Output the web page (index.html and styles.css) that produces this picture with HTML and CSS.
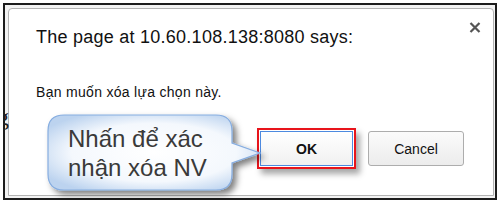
FILE: index.html
```html
<!DOCTYPE html>
<html>
<head>
<meta charset="utf-8">
<link rel="stylesheet" href="styles.css">
</head>
<body>
<div class="frame">
  <div class="dialog">
    <button class="close" aria-label="Close">
      <svg width="12" height="11" viewBox="0 0 12 11"><path d="M1.5 1 L10.5 10 M10.5 1 L1.5 10" stroke="#555" stroke-width="2.2" fill="none"/></svg>
    </button>
    <div class="title">The page at 10.60.108.138:8080 says:</div>
    <div class="message">Bạn muốn xóa lựa chọn này.</div>
    <div class="actions">
      <div class="highlight"><button class="btn btn-ok">OK</button></div>
      <button class="btn btn-cancel">Cancel</button>
    </div>
  </div>
</div>
<div class="stray"><span>g</span></div>
<div class="callout">
  <svg class="callout-shape" width="225" height="90" viewBox="0 0 225 90">
    <defs>
      <radialGradient id="bg" cx="50%" cy="50%" r="60%">
        <stop offset="0%" stop-color="#ffffff"/>
        <stop offset="65%" stop-color="#f4f8fd"/>
        <stop offset="100%" stop-color="#bcd3ef"/>
      </radialGradient>
      <filter id="sh" x="-10%" y="-10%" width="130%" height="140%">
        <feDropShadow dx="4" dy="4" stdDeviation="3" flood-color="#000" flood-opacity="0.5"/>
      </filter>
    </defs>
    <path d="M20 5 H172 Q188 5 188 21 V33 L216 43 L188 53 V64 Q188 80 172 80 H20 Q4 80 4 64 V21 Q4 5 20 5 Z" fill="url(#bg)" stroke="#86ade0" stroke-width="1.2" filter="url(#sh)"/>
  </svg>
  <div class="callout-text">Nhấn để xác<br>nhận xóa NV</div>
</div>
</body>
</html>
```

FILE: styles.css
```css
html, body {
  margin: 0;
  padding: 0;
  background: #ffffff;
}

body {
  width: 500px;
  height: 203px;
  position: relative;
  overflow: hidden;
  font-family: "Liberation Sans", Arial, sans-serif;
}

.frame {
  margin: 3px 0 0 3px;
  width: 490px;
  height: 193px;
  border: 2px solid #1c1c1c;
  padding: 1px 2px 2px 1px;
  box-sizing: content-box;
  background: #f3f3f3;
  width: 487px;
  height: 190px;
}

.dialog {
  position: relative;
  margin: 2px 0 0 2px;
  width: 484px;
  height: 186px;
  border: 1px solid #b3b3b3;
  border-radius: 4px 4px 0 0;
  background: #ffffff;
  padding: 17px 0 0 27px;
  box-sizing: border-box;
  width: 486px;
  height: 188px;
}

.close {
  position: absolute;
  top: 13px;
  right: 12px;
  border: 0;
  padding: 0;
  background: none;
  width: 12px;
  height: 11px;
}

.close svg {
  display: block;
}

.title {
  font-size: 18px;
  line-height: 22px;
  letter-spacing: 0.25px;
  color: #111;
}

.message {
  margin-top: 36px;
  font-size: 14px;
  line-height: 17px;
  letter-spacing: 0.3px;
  color: #111;
}

.actions {
  margin-top: 27px;
  display: flex;
  justify-content: flex-end;
  align-items: center;
  gap: 12px;
  padding-right: 29px;
}

.highlight {
  border: 2px solid #e8141b;
  padding: 1px;
  box-shadow: 4px 5px 6px rgba(0, 0, 0, 0.35);
  display: flex;
}

.btn {
  font-family: "Liberation Sans", Arial, sans-serif;
  font-size: 14px;
  height: 35px;
  padding: 0;
  color: #111;
  box-sizing: border-box;
}

.btn-ok {
  width: 93px;
  font-weight: bold;
  border: 1px solid #4d8ae0;
  border-radius: 0;
  background: linear-gradient(#ffffff, #f1f1f1);
}

.btn-cancel {
  width: 96px;
  border: 1px solid #adadad;
  border-radius: 3px;
  background: linear-gradient(#fbfbfb, #ececec);
}

.stray {
  position: absolute;
  left: 3px;
  top: 104px;
  width: 6px;
  height: 30px;
  overflow: hidden;
}

.stray span {
  position: absolute;
  left: -6px;
  top: 0;
  font-family: "Liberation Serif", serif;
  font-size: 24px;
  line-height: 26px;
  color: #222;
}

.callout {
  position: absolute;
  left: 44px;
  top: 110px;
  width: 225px;
  height: 90px;
}

.callout-shape {
  position: absolute;
  left: 0;
  top: 0;
}

.callout-text {
  position: absolute;
  left: 24px;
  top: 14px;
  font-size: 24px;
  line-height: 29px;
  color: #3a3a3a;
  white-space: nowrap;
}
```
